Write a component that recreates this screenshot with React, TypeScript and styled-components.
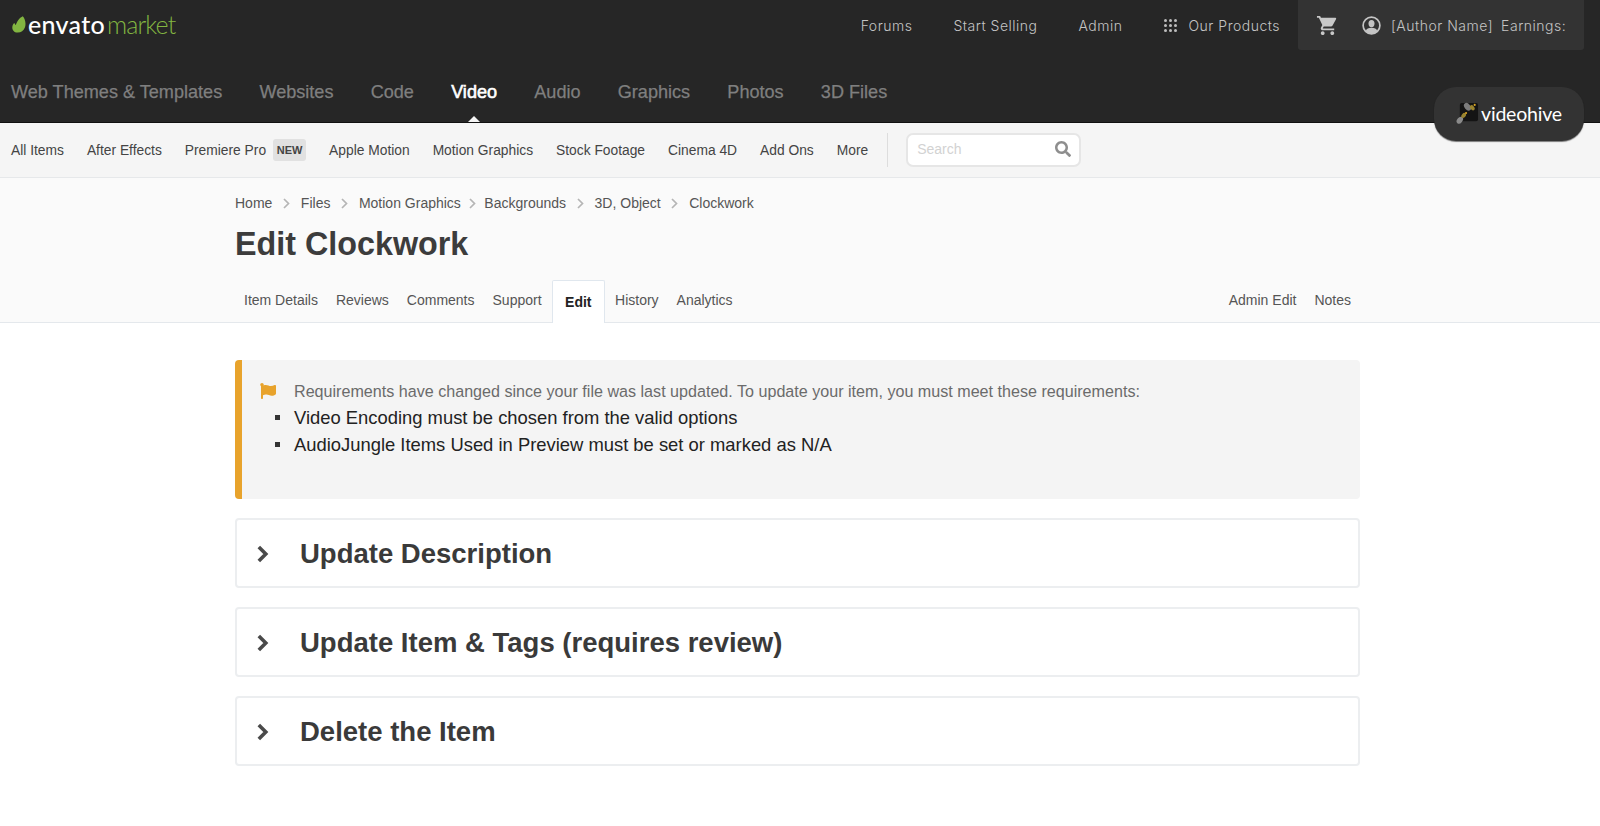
import styled, { createGlobalStyle } from "styled-components";
import { FaFlag, FaSearch } from "react-icons/fa";
import { MdShoppingCart } from "react-icons/md";

const mainLinks = ["Web Themes & Templates", "Websites", "Code", "Video", "Audio", "Graphics", "Photos", "3D Files"];
const subLinks = ["All Items", "After Effects", "Premiere Pro", "Apple Motion", "Motion Graphics", "Stock Footage", "Cinema 4D", "Add Ons", "More"];
const crumbs = ["Home", "Files", "Motion Graphics", "Backgrounds", "3D, Object", "Clockwork"];
const tabs = ["Item Details", "Reviews", "Comments", "Support", "Edit", "History", "Analytics"];
const panels = ["Update Description", "Update Item & Tags (requires review)", "Delete the Item"];

function Leaf() {
  return (
    <svg width="14" height="17" viewBox="0 0 14 17">
      <path d="M10.8 0.3C13.2 3 14.2 7.4 13 11.2C11.8 14.8 8.6 16.8 5.4 16.6C2.2 16.4 0.2 14 0.3 11.2C0.4 8.8 1.6 7 2.5 7.2C3.1 7.4 3 8.8 3.5 8.9C4 8.9 4.5 6.4 6 4.4C7.4 2.5 9.2 1 10.8 0.3Z" fill="#82b541" />
    </svg>
  );
}

function Bees() {
  return (
    <svg width="23" height="25" viewBox="0 0 24 26">
      <rect x="4" y="2" width="19" height="19" rx="2" fill="#141414" />
      <ellipse cx="12" cy="6" rx="3" ry="4.5" fill="#7c7c7c" transform="rotate(-40 12 6)" />
      <ellipse cx="17" cy="7" rx="2" ry="3" fill="#9a8430" transform="rotate(-40 17 7)" />
      <circle cx="19.5" cy="4" r="1.1" fill="#d9a322" />
      <ellipse cx="4" cy="20" rx="2.8" ry="4" fill="#8a8a8a" transform="rotate(40 4 20)" />
      <ellipse cx="8" cy="15" rx="2" ry="3" fill="#9a8430" transform="rotate(40 8 15)" />
      <circle cx="10.5" cy="12.5" r="1.1" fill="#d9a322" />
    </svg>
  );
}

function Dots() {
  const spots = [1.5, 6.5, 11.5];
  return (
    <svg width="13" height="13" viewBox="0 0 13 13">
      {spots.map((y) => spots.map((x) => <circle key={`${x}-${y}`} cx={x} cy={y} r="1.5" fill="#bdbdbd" />))}
    </svg>
  );
}

function Avatar() {
  return (
    <svg width="19" height="19" viewBox="0 0 19 19">
      <circle cx="9.5" cy="9.5" r="8.4" fill="none" stroke="#c4c4c4" strokeWidth="1.7" />
      <ellipse cx="9.5" cy="7.6" rx="3" ry="3.6" fill="#c4c4c4" />
      <path d="M3.6 15.2C4.4 12.6 6.6 11.8 9.5 11.8C12.4 11.8 14.6 12.6 15.4 15.2C13.8 16.7 11.8 17.4 9.5 17.4C7.2 17.4 5.2 16.7 3.6 15.2Z" fill="#c4c4c4" />
    </svg>
  );
}

function Chevron() {
  return (
    <svg width="12" height="18" viewBox="0 0 12 18">
      <path d="M1.8 2L8.8 9L1.8 16" fill="none" stroke="#4a4a4a" strokeWidth="3.6" />
    </svg>
  );
}

function CrumbChevron() {
  return (
    <svg width="7" height="11" viewBox="0 0 7 11">
      <path d="M1 1L5.5 5.5L1 10" fill="none" stroke="#b5b5b5" strokeWidth="1.7" />
    </svg>
  );
}

export default function App() {
  return (
    <>
      <GlobalStyle />
      <Header>
        <TopRow>
          <Logo>
            <Leaf />
            <LogoWhite>envato</LogoWhite>
            <LogoGreen>market</LogoGreen>
          </Logo>
          <TopLinks>
            <TopLink>Forums</TopLink>
            <TopLink>Start Selling</TopLink>
            <TopLink>Admin</TopLink>
            <Products>
              <Dots />
              <TopLink>Our Products</TopLink>
            </Products>
          </TopLinks>
          <UserBox>
            <MdShoppingCart size={23} color="#c8c8c8" />
            <UserName>
              <Avatar />
              <TopLink>[Author Name]</TopLink>
              <TopLink>Earnings:</TopLink>
            </UserName>
          </UserBox>
        </TopRow>
        <MainNav>
          {mainLinks.map((link) => (
            <MainLink key={link} $active={link === "Video"}>{link}</MainLink>
          ))}
        </MainNav>
        <HivePill>
          <Bees />
          <HiveName>videohive</HiveName>
        </HivePill>
      </Header>

      <SubNav>
        {subLinks.map((link) => (
          <SubLink key={link}>
            {link}
            {link === "Premiere Pro" && <NewTag>NEW</NewTag>}
          </SubLink>
        ))}
        <Divider />
        <SearchBox>
          <SearchHint>Search</SearchHint>
          <FaSearch size={16} color="#8e8e8e" />
        </SearchBox>
      </SubNav>

      <PageHead>
        <Container>
          <Breadcrumbs>
            {crumbs.map((crumb, i) => (
              <Crumb key={crumb}>
                {crumb}
                {i < crumbs.length - 1 && (
                  <CrumbArrow $tight={crumb === "Motion Graphics"}>
                    <CrumbChevron />
                  </CrumbArrow>
                )}
              </Crumb>
            ))}
          </Breadcrumbs>
          <Title>Edit Clockwork</Title>
          <TabRow>
            <TabGroup>
              {tabs.map((tab) => (
                <Tab key={tab} $active={tab === "Edit"}>{tab}</Tab>
              ))}
            </TabGroup>
            <TabGroup>
              <Tab>Admin Edit</Tab>
              <Tab>Notes</Tab>
            </TabGroup>
          </TabRow>
        </Container>
      </PageHead>

      <Content>
        <Alert>
          <AlertHead>
            <FlagSlot>
              <FaFlag size={16} color="#e8a32c" />
            </FlagSlot>
            Requirements have changed since your file was last updated. To update your item, you must meet these requirements:
          </AlertHead>
          <AlertList>
            <li>Video Encoding must be chosen from the valid options</li>
            <li>AudioJungle Items Used in Preview must be set or marked as N/A</li>
          </AlertList>
        </Alert>
        {panels.map((panel) => (
          <Panel key={panel}>
            <Chevron />
            <PanelTitle>{panel}</PanelTitle>
          </Panel>
        ))}
      </Content>
    </>
  );
}

const GlobalStyle = createGlobalStyle`
  html, body {
    margin: 0;
    background: #fff;
    font-family: "Liberation Sans", Arial, sans-serif;
  }
`;

const Header = styled.header`
  position: relative;
  height: 122px;
  background: #262626;
  border-bottom: 1px solid #111;
`;

const TopRow = styled.div`
  display: flex;
  height: 50px;
  padding: 0 16px 0 12px;
  align-items: flex-start;
`;

const Logo = styled.div`
  display: flex;
  align-items: center;
  height: 50px;
  margin-top: -1px;
`;

const LogoWhite = styled.span`
  font-family: Lato, sans-serif;
  font-size: 25px;
  font-weight: 500;
  color: #fff;
  margin-left: 2px;
  letter-spacing: 0.3px;
`;

const LogoGreen = styled.span`
  font-family: Lato, sans-serif;
  font-size: 25px;
  font-weight: 300;
  color: #82b541;
  margin-left: 2px;
  letter-spacing: -0.9px;
`;

const TopLinks = styled.div`
  display: flex;
  align-items: center;
  gap: 41px;
  height: 50px;
  margin-left: auto;
  margin-right: 18px;
`;

const TopLink = styled.span`
  font-family: Inter, sans-serif;
  font-size: 14px;
  font-weight: 300;
  letter-spacing: 0.5px;
  color: #c4c4c4;
  white-space: nowrap;
`;

const Products = styled.div`
  display: flex;
  align-items: center;
  gap: 12px;
`;

const UserBox = styled.div`
  display: flex;
  align-items: center;
  gap: 23px;
  width: 286px;
  height: 50px;
  box-sizing: border-box;
  padding-left: 18px;
  background: #333;
  border-radius: 0 0 3px 3px;
`;

const UserName = styled.div`
  display: flex;
  align-items: center;
  gap: 8px;

  svg {
    margin-right: 2px;
  }
`;

const MainNav = styled.nav`
  display: flex;
  gap: 37.2px;
  padding: 28px 0 0 11px;
`;

const MainLink = styled.a<{ $active?: boolean }>`
  position: relative;
  font-size: 18.1px;
  line-height: 28px;
  color: ${(p) => (p.$active ? "#fff" : "#7f7f7f")};
  -webkit-text-stroke: ${(p) => (p.$active ? "0.6px" : "0.25px")} currentColor;

  ${(p) =>
    p.$active &&
    `&::after {
      content: "";
      position: absolute;
      left: 50%;
      bottom: -16px;
      margin-left: -6px;
      border: 6px solid transparent;
      border-top: 0;
      border-bottom-color: #f5f5f5;
    }`}
`;

const HivePill = styled.div`
  position: absolute;
  top: 87px;
  right: 16px;
  width: 150px;
  height: 54px;
  box-sizing: border-box;
  padding-bottom: 2px;
  display: flex;
  align-items: center;
  justify-content: center;
  gap: 2px;
  background: #333;
  border-radius: 22px;
  box-shadow: 0 1px 1px rgba(0, 0, 0, 0.5);
  z-index: 2;
`;

const HiveName = styled.span`
  font-family: Lato, sans-serif;
  font-size: 19.5px;
  color: #fff;
  letter-spacing: -0.2px;
`;

const SubNav = styled.nav`
  display: flex;
  align-items: center;
  gap: 23px;
  height: 54px;
  padding-left: 11px;
  background: #f5f5f5;
  border-bottom: 1px solid #e6e8ea;
`;

const SubLink = styled.a`
  display: flex;
  align-items: center;
  gap: 7px;
  font-size: 13.8px;
  color: #444;
`;

const NewTag = styled.span`
  display: inline-block;
  width: 33px;
  height: 22px;
  line-height: 23px;
  text-align: center;
  font-size: 11px;
  font-weight: 700;
  color: #444;
  background: #e1e1e1;
  border-radius: 3px;
`;

const Divider = styled.span`
  width: 1px;
  height: 34px;
  margin-left: -4px;
  background: #ddd;
`;

const SearchBox = styled.div`
  display: flex;
  align-items: center;
  justify-content: space-between;
  width: 175px;
  height: 34px;
  box-sizing: border-box;
  margin-left: -5px;
  padding: 0 8px 2px 9px;
  background: #fff;
  border: 2px solid #e6e6e6;
  border-radius: 7px;
`;

const SearchHint = styled.span`
  font-size: 14px;
  color: #d2d2d2;
`;

const PageHead = styled.div`
  height: 144px;
  background: #fafafa;
  border-bottom: 1px solid #e4e8ec;
`;

const Container = styled.div`
  width: 1125px;
  height: 100%;
  margin-left: 235px;
  display: flex;
  flex-direction: column;
`;

const Breadcrumbs = styled.div`
  display: flex;
  padding-top: 17px;
  line-height: 17px;
`;

const Crumb = styled.span`
  display: flex;
  align-items: center;
  font-size: 14px;
  color: #555;
`;

const CrumbArrow = styled.span<{ $tight?: boolean }>`
  display: flex;
  justify-content: center;
  width: ${(p) => (p.$tight ? "23.5px" : "28.5px")};
`;

const Title = styled.h1`
  margin: 12px 0 0;
  font-size: 32.3px;
  line-height: 40px;
  font-weight: 700;
  color: #3c3c3c;
`;

const TabRow = styled.div`
  display: flex;
  justify-content: space-between;
  margin-top: auto;
`;

const TabGroup = styled.div`
  display: flex;
  align-items: flex-end;
`;

const Tab = styled.a<{ $active?: boolean }>`
  box-sizing: border-box;
  height: ${(p) => (p.$active ? "43px" : "41px")};
  padding: ${(p) => (p.$active ? "13px 12.5px 0" : "11px 9px 0")};
  margin: ${(p) => (p.$active ? "0 1px -1px" : "0")};
  font-size: 14px;
  color: ${(p) => (p.$active ? "#222" : "#555")};
  font-weight: ${(p) => (p.$active ? 700 : 400)};
  background: ${(p) => (p.$active ? "#fff" : "transparent")};
  border: ${(p) => (p.$active ? "1px solid #e0e7ee" : "0")};
  border-bottom: 0;
  border-radius: 2px 2px 0 0;
`;

const Content = styled.main`
  width: 1125px;
  margin-left: 235px;
  padding-top: 37px;
`;

const Alert = styled.section`
  height: 139px;
  box-sizing: border-box;
  padding: 21px 20px 0 18px;
  background: #f4f4f4;
  border-left: 7px solid #e8a32c;
  border-radius: 4px;
`;

const AlertHead = styled.div`
  display: flex;
  align-items: center;
  font-size: 16.13px;
  line-height: 20px;
  color: #6b6b6b;
`;

const FlagSlot = styled.span`
  display: flex;
  width: 34px;
`;

const AlertList = styled.ul`
  margin: 3px 0 0;
  padding: 0 0 0 34px;
  list-style: none;

  li {
    position: relative;
    font-size: 18.4px;
    line-height: 27px;
    color: #222;
  }

  li::before {
    content: "";
    position: absolute;
    left: -19px;
    top: 11px;
    width: 5px;
    height: 5px;
    background: #333;
  }
`;

const Panel = styled.section`
  display: flex;
  align-items: center;
  height: 70px;
  box-sizing: border-box;
  margin-top: 19px;
  padding: 2px 0 0 20px;
  background: #fff;
  border: 2px solid #eceef0;
  border-radius: 4px;
`;

const PanelTitle = styled.h2`
  margin: 0 0 0 31px;
  font-size: 27.5px;
  font-weight: 700;
  color: #3a3a3a;
`;
